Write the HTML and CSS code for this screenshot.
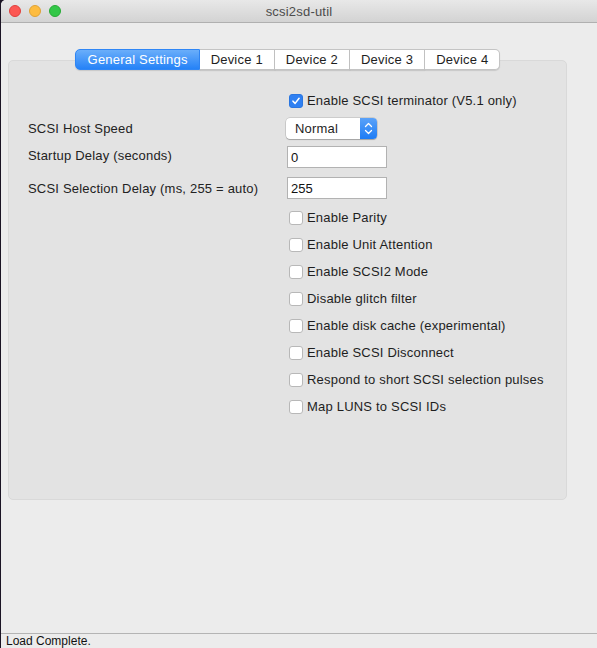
FILE: index.html
```html
<!DOCTYPE html>
<html lang="en">
<head>
    <meta charset="UTF-8">
    <title>scsi2sd-util</title>
    <link rel="stylesheet" href="styles.css">
</head>
<body>
    <div class="window">
        <div class="titlebar">
            <div class="lights">
                <span class="light red"></span>
                <span class="light yellow"></span>
                <span class="light green"></span>
            </div>
            <div class="title">scsi2sd-util</div>
        </div>

        <div class="content">
            <div class="tabs">
                <div class="tab active">General Settings</div>
                <div class="tab">Device 1</div>
                <div class="tab">Device 2</div>
                <div class="tab">Device 3</div>
                <div class="tab">Device 4</div>
            </div>

            <div class="panel">
                <div class="settings">
                    <div></div>
                    <label class="check"><span class="box checked"><svg viewBox="0 0 14 14"><path d="M3.5 7.2 L6 9.8 L10.6 3.8" /></svg></span>Enable SCSI terminator (V5.1 only)</label>

                    <div class="label">SCSI Host Speed</div>
                    <div class="select">
                        <span class="select-value">Normal</span>
                        <span class="select-arrows"><svg viewBox="0 0 17 21"><path d="M5.5 8.5 L8.5 5.5 L11.5 8.5 M5.5 12.5 L8.5 15.5 L11.5 12.5" /></svg></span>
                    </div>

                    <div class="label label-high">Startup Delay (seconds)</div>
                    <input type="text" class="field" value="0">

                    <div class="label">SCSI Selection Delay (ms, 255 = auto)</div>
                    <input type="text" class="field" value="255">

                    <div></div>
                    <label class="check"><span class="box"></span>Enable Parity</label>
                    <div></div>
                    <label class="check"><span class="box"></span>Enable Unit Attention</label>
                    <div></div>
                    <label class="check"><span class="box"></span>Enable SCSI2 Mode</label>
                    <div></div>
                    <label class="check"><span class="box"></span>Disable glitch filter</label>
                    <div></div>
                    <label class="check"><span class="box"></span>Enable disk cache (experimental)</label>
                    <div></div>
                    <label class="check"><span class="box"></span>Enable SCSI Disconnect</label>
                    <div></div>
                    <label class="check"><span class="box"></span>Respond to short SCSI selection pulses</label>
                    <div></div>
                    <label class="check"><span class="box"></span>Map LUNS to SCSI IDs</label>
                </div>
            </div>
        </div>

        <div class="statusbar">Load Complete.</div>
    </div>
</body>
</html>
```

FILE: styles.css
```css
* {
    margin: 0;
    padding: 0;
    box-sizing: border-box;
    font-family: "Liberation Sans", Arial, sans-serif;
}

body {
    background-color: #1b1424;
    color: #1e1e1e;
    width: 597px;
    height: 648px;
    overflow: hidden;
}

.window {
    margin-left: 1px;
    height: 648px;
    background-color: #ececec;
    display: flex;
    flex-direction: column;
    border-top-left-radius: 5px;
    overflow: hidden;
}

/* title bar */
.titlebar {
    height: 23px;
    flex: none;
    display: flex;
    align-items: center;
    background: linear-gradient(#e8e8e8, #d3d3d3);
    border-bottom: 1px solid #b0b0b0;
    position: relative;
}

.lights {
    display: flex;
    gap: 8px;
    padding-left: 8px;
}

.light {
    width: 12px;
    height: 12px;
    border-radius: 50%;
}

.red {
    background-color: #fc5753;
    border: 1px solid #df3f3c;
}

.yellow {
    background-color: #fdbc40;
    border: 1px solid #dea236;
}

.green {
    background-color: #33c748;
    border: 1px solid #27aa35;
}

.title {
    position: absolute;
    left: 0;
    right: 0;
    text-align: center;
    font-size: 13px;
    letter-spacing: 0.2px;
    color: #4c4c4c;
}

/* tabs and panel */
.content {
    flex: 1;
    padding: 26px 30px 0 7px;
}

.tabs {
    display: flex;
    justify-content: center;
    position: relative;
    z-index: 1;
    margin-bottom: -10px;
}

.tab {
    height: 21px;
    padding: 0 11px;
    font-size: 13px;
    letter-spacing: 0.2px;
    line-height: 20px;
    background-color: #ffffff;
    border: 1px solid #c4c4c4;
    border-left: none;
    box-shadow: 0 1px 1px rgba(0, 0, 0, 0.12);
}

.tab:first-child {
    border-radius: 5px 0 0 5px;
}

.tab:last-child {
    border-radius: 0 5px 5px 0;
}

.tab.active {
    color: #ffffff;
    padding: 0 11px 0 12px;
    border: 1px solid #2f86f5;
    background: linear-gradient(#6aaefa, #2582f7);
}

.panel {
    height: 440px;
    background-color: #e3e3e3;
    border: 1px solid #d9d9d9;
    border-radius: 5px;
    padding: 26px 0 0 19px;
}

.settings {
    display: grid;
    grid-template-columns: 258px 1fr;
    grid-template-rows: 27px 28px 30px 32px repeat(8, 27px);
    align-items: center;
    font-size: 13px;
    letter-spacing: 0.2px;
}

.label {
    color: #222222;
}

.label-high {
    margin-bottom: 3px;
}

/* checkboxes */
.check {
    display: flex;
    align-items: center;
    gap: 4px;
    margin-left: 3px;
}

.box {
    width: 14px;
    height: 14px;
    background-color: #ffffff;
    border: 1px solid #b8b8b8;
    border-radius: 3px;
    display: flex;
}

.box.checked {
    background-color: #2f80f2;
    border-color: #2a76e0;
}

.box svg {
    width: 12px;
    height: 12px;
    fill: none;
    stroke: #ffffff;
    stroke-width: 1.8;
    stroke-linecap: round;
    stroke-linejoin: round;
}

/* popup button */
.select {
    width: 91px;
    height: 21px;
    display: flex;
    background-color: #ffffff;
    border-radius: 4px;
    box-shadow: 0 0 0 0.5px rgba(0, 0, 0, 0.2), 0 1px 1px rgba(0, 0, 0, 0.2);
    overflow: hidden;
}

.select-value {
    flex: 1;
    padding-left: 9px;
    line-height: 21px;
}

.select-arrows {
    width: 17px;
    background: linear-gradient(#5aa2f9, #1d7cf5);
    display: flex;
}

.select-arrows svg {
    width: 17px;
    height: 21px;
    fill: none;
    stroke: #ffffff;
    stroke-width: 1.3;
    stroke-linecap: round;
    stroke-linejoin: round;
}

/* text fields */
.field {
    width: 100px;
    height: 22px;
    margin-left: 1px;
    padding: 0 3px;
    border: 1px solid #b2b2b2;
    background-color: #ffffff;
    font-size: 13px;
    color: #111111;
}

/* status bar */
.statusbar {
    height: 15px;
    flex: none;
    border-top: 1px solid #b4b4b4;
    font-size: 12px;
    line-height: 14px;
    padding-left: 5px;
    color: #111111;
}
```
